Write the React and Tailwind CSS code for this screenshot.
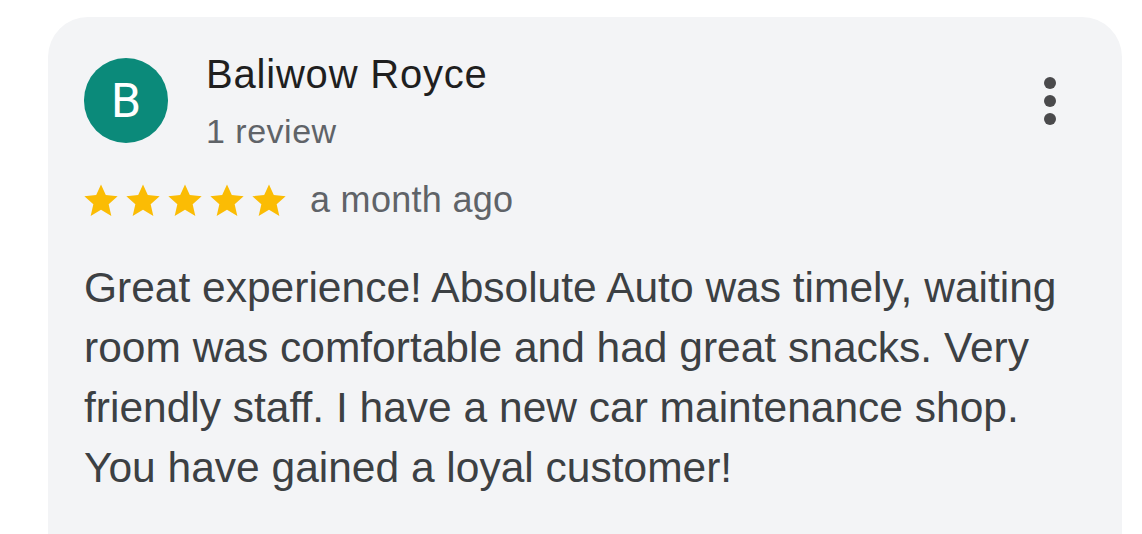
import React from 'react';

function Star() {
  return (
    <svg viewBox="0 0 24 24" className="w-[36px] h-[36px]" fill="#fbbc04">
      <path d="M12 1.6l3.2 7.1 7.9.8-6 5.3 1.8 7.8L12 18.5l-6.9 4.1 1.8-7.8-6-5.3 7.9-.8z" />
    </svg>
  );
}

export default function App() {
  return (
    <div
      className="w-[1142px] h-[534px] bg-white pt-[17px] pl-[48px] pr-[20px] flex overflow-hidden"
      style={{ fontFamily: '"Liberation Sans", Arial, sans-serif' }}
    >
      <div className="flex-1 bg-[#f3f4f6] rounded-t-[40px] pt-[33px] pl-[36px] pr-[36px]">
        {/* header */}
        <div className="flex items-start">
          <div className="mt-[8px] w-[84px] h-[85px] rounded-full bg-[#0b8a7a] flex items-center justify-center shrink-0">
            <span
              className="text-white text-[48px] leading-none mt-[1px]"
              style={{ fontFamily: 'Roboto, "Liberation Sans", sans-serif' }}
            >
              B
            </span>
          </div>
          <div className="ml-[38px] flex-1 flex flex-col">
            <span className="text-[40px] leading-[48px] tracking-[0.8px] text-[#1f1f1f]">
              Baliwow Royce
            </span>
            <span className="mt-[13px] text-[34px] leading-[40px] tracking-[0.5px] text-[#5f6368]">
              1 review
            </span>
          </div>
          <div className="mt-[27px] mr-[30px] flex flex-col gap-[6px]">
            <span className="block w-[12px] h-[12px] rounded-full bg-[#4a4a4c]" />
            <span className="block w-[12px] h-[12px] rounded-full bg-[#4a4a4c]" />
            <span className="block w-[12px] h-[12px] rounded-full bg-[#4a4a4c]" />
          </div>
        </div>

        {/* rating */}
        <div className="mt-[29px] flex items-center">
          <div className="flex gap-[6px] -ml-[1px]">
            <Star />
            <Star />
            <Star />
            <Star />
            <Star />
          </div>
          <span className="ml-[23px] text-[36px] leading-[40px] tracking-[0.3px] text-[#5f6368]">
            a month ago
          </span>
        </div>

        {/* body */}
        <p className="mt-[38px] text-[42.5px] leading-[60px] text-[#3c4043]">
          Great experience! Absolute Auto was timely, waiting room was comfortable and had great
          snacks. Very friendly staff. I have a new car maintenance shop. You have gained a loyal
          customer!
        </p>
      </div>
    </div>
  );
}
